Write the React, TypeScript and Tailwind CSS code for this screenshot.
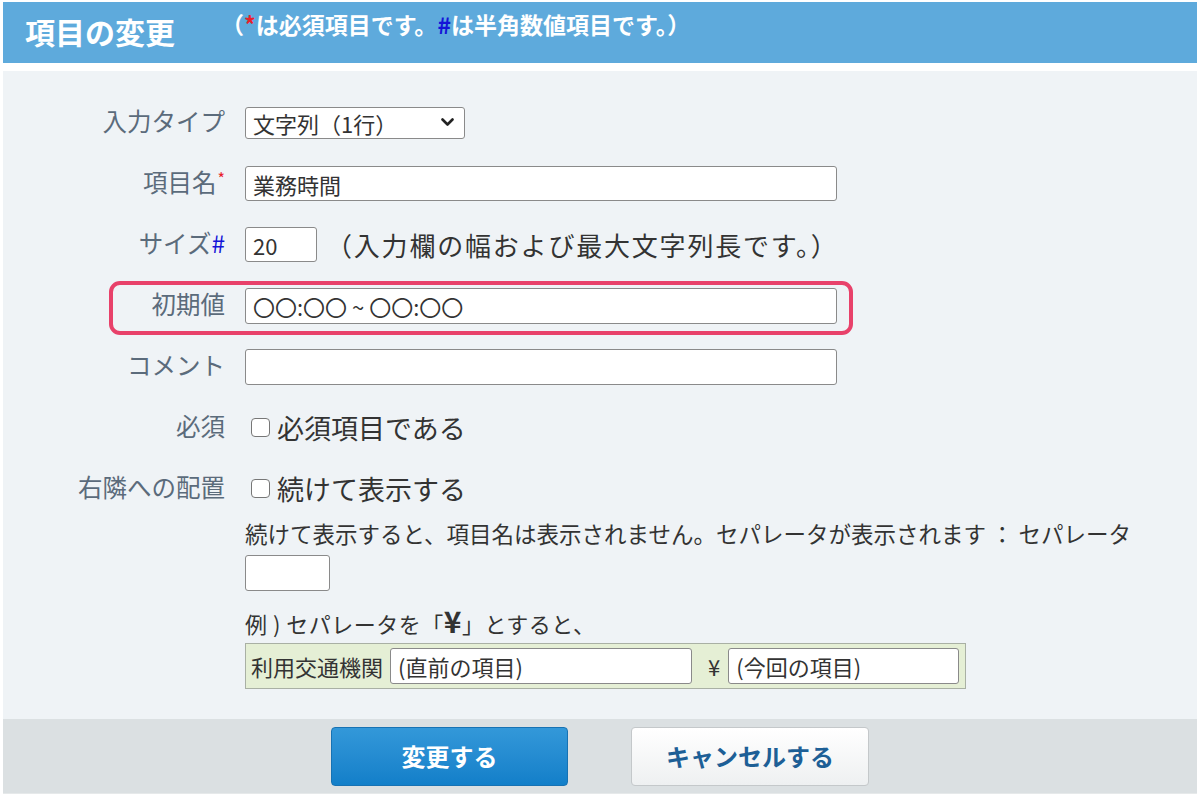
import React from 'react'

const FONT = { fontFamily: '"Noto Sans CJK JP", "Noto Sans", sans-serif' }

function Label({ children }: { children: React.ReactNode }) {
  return (
    <div className="-mt-[3px] flex w-[222px] shrink-0 justify-end text-[24.5px] leading-none text-[#5b6b7b]">
      {children}
    </div>
  )
}

function TextBox({ value = '', className = '' }: { value?: string; className?: string }) {
  return (
    <div
      className={`flex items-center rounded-[3px] border border-[#8a8a8a] bg-white pl-[7px] text-[22px] leading-none text-[#333] ${className}`}
    >
      {value}
    </div>
  )
}

function CheckRow({ text }: { text: string }) {
  return (
    <div className="flex items-center">
      <span className="ml-[6px] mr-[7px] inline-block h-[19px] w-[19px] rounded-[4px] border border-[#777] bg-white" />
      <span className="text-[27px] leading-none text-[#333]">{text}</span>
    </div>
  )
}

export default function App() {
  return (
    <div className="h-[797px] w-full bg-white pt-[2px]" style={FONT}>
      <div className="mx-[3px]">
        {/* Header */}
        <div className="flex h-[61px] items-start bg-[#5eaadc] pl-[22px]">
          <h1 className="mt-[14px] text-[30px] font-bold leading-none text-white">項目の変更</h1>
          <p className="ml-[46px] mt-[11px] text-[23px] font-bold leading-none text-white">
            （<span className="text-[#e8202a]">*</span>は必須項目です。
            <span className="text-[#1414d8]">#</span>は半角数値項目です。）
          </p>
        </div>

        {/* Body */}
        <div className="mt-[8px] bg-[#eff3f6] pb-[30px] pt-[21px]">
          <div className="flex h-[61px] items-center gap-[20px]">
            <Label>入力タイプ</Label>
            <div className="relative flex h-[32px] w-[220px] items-center justify-between rounded-[3px] border border-[#8a8a8a] bg-white pl-[7px] pr-[10px] text-[22px] leading-none text-[#333]">
              <span>文字列（1行）</span>
              <svg width="13" height="9" viewBox="0 0 13 9" fill="none">
                <path d="M1.5 1.5L6.5 6.5L11.5 1.5" stroke="#222" strokeWidth="2.6" strokeLinecap="round" strokeLinejoin="round" />
              </svg>
            </div>
          </div>

          <div className="flex h-[61px] items-center gap-[20px]">
            <Label>
              項目名<span className="ml-[1px] self-start text-[16px] text-[#e8202a]">*</span>
            </Label>
            <TextBox value="業務時間" className="h-[35px] w-[592px]" />
          </div>

          <div className="flex h-[61px] items-center gap-[20px]">
            <Label>
              サイズ<span className="text-[#1414d8]">#</span>
            </Label>
            <TextBox value="20" className="h-[35px] w-[72px]" />
            <span className="-ml-[11px] text-[26px] leading-none tracking-[1.8px] text-[#333]">
              （入力欄の幅および最大文字列長です。）
            </span>
          </div>

          <div className="relative flex h-[61px] items-center gap-[20px]">
            <div className="absolute left-[106px] top-[6px] h-[54px] w-[744px] rounded-[11px] border-[4px] border-[#e8416a]" />
            <Label>初期値</Label>
            <TextBox value="〇〇:〇〇 ~ 〇〇:〇〇" className="h-[36px] w-[592px]" />
          </div>

          <div className="flex h-[61px] items-center gap-[20px]">
            <Label>コメント</Label>
            <TextBox className="h-[36px] w-[592px]" />
          </div>

          <div className="flex h-[61px] items-center gap-[20px]">
            <Label>必須</Label>
            <CheckRow text="必須項目である" />
          </div>

          <div className="flex h-[61px] items-center gap-[20px]">
            <Label>右隣への配置</Label>
            <CheckRow text="続けて表示する" />
          </div>

          <div className="ml-[242px] text-[#333]">
            <p className="text-[22.5px] leading-[28px]">
              続けて表示すると、項目名は表示されません。セパレータが表示されます ： セパレータ
            </p>
            <TextBox className="mt-[8px] h-[36px] w-[85px]" />
            <p className="mt-[15px] text-[22px] leading-[28px] tracking-[0.5px]">
              例 ) セパレータを「<span className="text-[30px] font-bold">¥</span>」とすると、
            </p>
            <div className="mt-[6px] flex h-[46px] w-[721px] items-center border border-[#a9b0a4] bg-[#e5efd5] pl-[5px] text-[22px] leading-none">
              <span className="mr-[7px]">利用交通機関</span>
              <TextBox value="(直前の項目)" className="h-[36px] w-[302px] pl-[3px]" />
              <span className="ml-[16px] mr-[8px]">¥</span>
              <TextBox value="(今回の項目)" className="h-[36px] w-[231px] pl-[3px]" />
            </div>
          </div>
        </div>

        {/* Footer */}
        <div className="flex h-[75px] items-center justify-center gap-[63px] border-b border-[#e6e9ea] bg-[#dbe0e2]">
          <button className="h-[59px] w-[237px] rounded-[4px] border border-[#1772b3] bg-gradient-to-b from-[#3398d9] to-[#127fc9] text-[24px] font-bold text-white">
            変更する
          </button>
          <button className="h-[59px] w-[238px] rounded-[4px] border border-[#c4c8ca] bg-gradient-to-b from-white to-[#eef0f1] text-[24px] font-bold text-[#1d5f96]">
            キャンセルする
          </button>
        </div>
      </div>
    </div>
  )
}
